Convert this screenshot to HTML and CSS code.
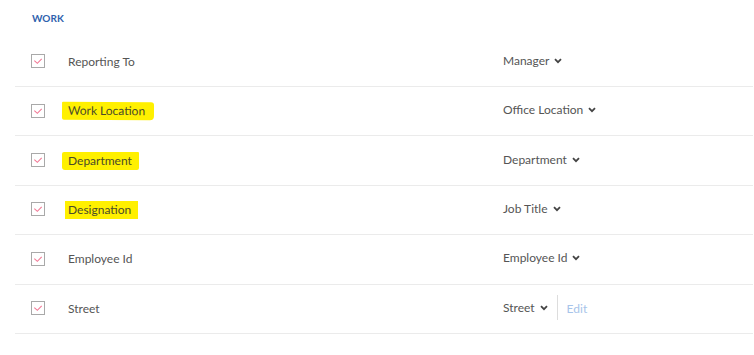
FILE: index.html
```html
<!DOCTYPE html>
<html>
<head>
<meta charset="utf-8">
<link rel="stylesheet" href="styles.css">
</head>
<body>
<div class="panel">
  <div class="heading">WORK</div>
  <div class="rows">
    <div class="row">
      <span class="check"><svg viewBox="0 0 13 13"><path d="M2.5 6 L5.8 9 L10.5 4.3" /></svg></span>
      <span class="label">Reporting To</span>
      <span class="field">Manager <svg class="chev" viewBox="0 0 8 6"><path d="M1 1.2 L4 4.2 L7 1.2" /></svg></span>
    </div>
    <div class="row">
      <span class="check"><svg viewBox="0 0 13 13"><path d="M2.5 6 L5.8 9 L10.5 4.3" /></svg></span>
      <span class="label"><span class="hl hl-a">Work Location</span></span>
      <span class="field">Office Location <svg class="chev" viewBox="0 0 8 6"><path d="M1 1.2 L4 4.2 L7 1.2" /></svg></span>
    </div>
    <div class="row">
      <span class="check"><svg viewBox="0 0 13 13"><path d="M2.5 6 L5.8 9 L10.5 4.3" /></svg></span>
      <span class="label"><span class="hl hl-b">Department</span></span>
      <span class="field">Department <svg class="chev" viewBox="0 0 8 6"><path d="M1 1.2 L4 4.2 L7 1.2" /></svg></span>
    </div>
    <div class="row">
      <span class="check"><svg viewBox="0 0 13 13"><path d="M2.5 6 L5.8 9 L10.5 4.3" /></svg></span>
      <span class="label"><span class="hl hl-c">Designation</span></span>
      <span class="field">Job Title <svg class="chev" viewBox="0 0 8 6"><path d="M1 1.2 L4 4.2 L7 1.2" /></svg></span>
    </div>
    <div class="row">
      <span class="check"><svg viewBox="0 0 13 13"><path d="M2.5 6 L5.8 9 L10.5 4.3" /></svg></span>
      <span class="label">Employee Id</span>
      <span class="field">Employee Id <svg class="chev" viewBox="0 0 8 6"><path d="M1 1.2 L4 4.2 L7 1.2" /></svg></span>
    </div>
    <div class="row">
      <span class="check"><svg viewBox="0 0 13 13"><path d="M2.5 6 L5.8 9 L10.5 4.3" /></svg></span>
      <span class="label">Street</span>
      <span class="field">Street <svg class="chev" viewBox="0 0 8 6"><path d="M1 1.2 L4 4.2 L7 1.2" /></svg><span class="divider"></span><span class="edit">Edit</span></span>
    </div>
  </div>
</div>
</body>
</html>
```

FILE: styles.css
```css
html, body {
  margin: 0;
  padding: 0;
  background: #ffffff;
}
body {
  font-family: Lato, "Open Sans", sans-serif;
  font-size: 12px;
  color: #555555;
}
.panel {
  padding-left: 15px;
  width: 738px;
}
.heading {
  height: 37.6px;
  padding-left: 17px;
  padding-top: 12px;
  box-sizing: border-box;
  font-size: 10px;
  font-weight: 700;
  color: #2f62ad;
  line-height: 12px;
}
.row {
  display: grid;
  grid-template-columns: 37px 435px 1fr;
  align-items: center;
  height: 48.4px;
  padding-left: 16px;
  border-bottom: 1px solid #ebebeb;
}
.check {
  width: 14px;
  height: 14px;
  border: 1px solid #a9a9a9;
  box-sizing: border-box;
  display: block;
  margin-top: -1px;
}
.check svg {
  width: 12px;
  height: 12px;
  display: block;
  fill: none;
  stroke: #f27895;
  stroke-width: 1.2;
}
.label {
  display: block;
  line-height: 16px;
}
.hl {
  display: inline-block;
  background: #fff000;
  color: #4a4a2a;
  margin-left: -6px;
  padding: 1px 9px 1px 6px;
  line-height: 16px;
}
.hl-a {
  padding-right: 9px;
  border-radius: 1px 3px 4px 2px;
  transform: rotate(0.4deg);
}
.hl-b {
  padding-right: 7px;
  border-radius: 2px 1px 2px 3px;
}
.hl-c {
  margin-left: -3px;
  padding-left: 3px;
  padding-right: 7px;
}
.field {
  display: flex;
  align-items: center;
  line-height: 16px;
  color: #555555;
  margin-top: -2px;
}
.chev {
  width: 8px;
  height: 6px;
  margin-left: 5px;
  fill: none;
  stroke: #444444;
  stroke-width: 1.8;
}
.divider {
  width: 1px;
  height: 25px;
  background: #dddddd;
  margin-left: 9px;
  margin-right: 9px;
}
.edit {
  color: #a7c4ea;
  margin-top: 2px;
}
```
